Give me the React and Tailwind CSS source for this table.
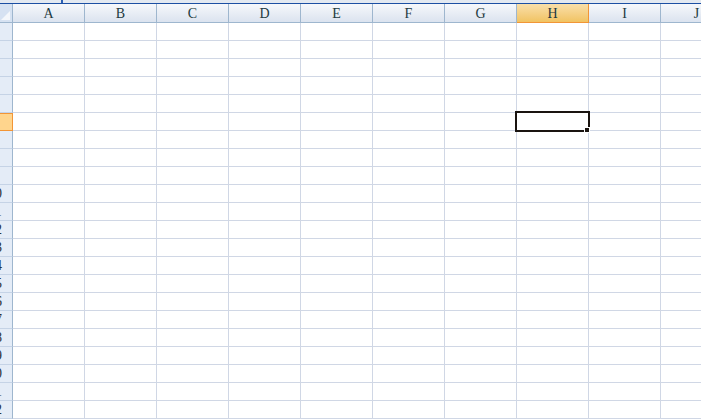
const columns = ['A', 'B', 'C', 'D', 'E', 'F', 'G', 'H', 'I', 'J']
const rows = Array.from({ length: 22 }, (_, i) => i + 1)
const activeCol = 'H'
const activeRow = 6

function ColumnHeader({ label }) {
  const active = label === activeCol
  return (
    <div
      className={
        active
          ? 'flex h-[19px] items-center justify-center border-r border-b border-[#f29536] bg-gradient-to-b from-[#f9dfa9] to-[#f1c361] text-[14px] text-[#223a40]'
          : 'flex h-[19px] items-center justify-center border-r border-b border-[#9eb6ce] bg-gradient-to-b from-[#f6f8fb] to-[#dbe3ef] text-[14px] text-[#223a40]'
      }
    >
      {label}
    </div>
  )
}

function RowHeader({ n }) {
  const active = n === activeRow
  return (
    <div
      className={
        active
          ? 'flex h-[18px] items-center overflow-hidden border-y border-r border-[#f29536] bg-[#ffd58d] text-[14px] text-[#2a3338]'
          : 'flex h-[18px] items-center overflow-hidden border-r border-b border-[#9eb6ce] border-b-[#c5d3e6] bg-[#e4ecf7] text-[14px] text-[#2a3338]'
      }
    >
      <span className="ml-[-20px] w-[30px] shrink-0 text-center">{n}</span>
    </div>
  )
}

function Cell({ col, row }) {
  const selected = col === activeCol && row === activeRow
  return (
    <div className="relative h-[18px] border-r border-b border-[#d0d7e5] bg-white">
      {selected && (
        <>
          <div className="absolute -left-[2px] -top-[2px] z-10 h-[21px] w-[75px] border-2 border-[#1a1410]" />
          <div className="absolute left-[67px] top-[14px] z-20 h-[6px] w-[6px] border border-white bg-[#1a1410]" />
        </>
      )}
    </div>
  )
}

function Row({ r }) {
  return (
    <>
      <RowHeader n={r} />
      {columns.map((c) => (
        <Cell key={c} col={c} row={r} />
      ))}
    </>
  )
}

export default function App() {
  return (
    <div
      className="h-[419px] w-[701px] overflow-hidden bg-white"
      style={{ fontFamily: '"Liberation Serif", "DejaVu Serif", serif' }}
    >
      <div className="relative h-[3px] bg-[#e3e9f1]">
        <div className="absolute left-[61px] top-0 h-[3px] w-[2px] bg-[#2b5fb4]" />
      </div>
      <div className="h-[1px] bg-[#1c4fa3]" />
      <div className="grid w-max grid-cols-[13px_repeat(10,72px)]">
        <div className="relative h-[19px] border-r border-b border-[#9eb6ce] bg-[#d6e2f2]">
          <div className="absolute bottom-[2px] right-[2px] h-0 w-0 border-b-[9px] border-l-[9px] border-b-[#f4f7fb] border-l-transparent" />
        </div>
        {columns.map((c) => (
          <ColumnHeader key={c} label={c} />
        ))}
        {rows.map((r) => (
          <Row key={r} r={r} />
        ))}
      </div>
    </div>
  )
}
